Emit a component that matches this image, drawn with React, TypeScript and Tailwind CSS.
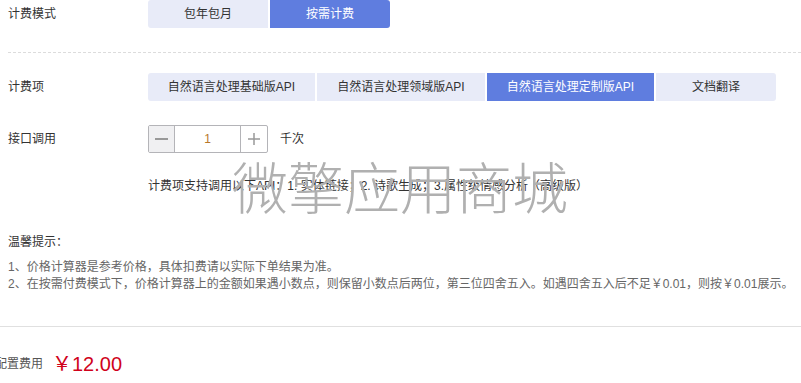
import React, { useState } from "react";

const modes = ["包年包月", "按需计费"];
const items = [
  { name: "自然语言处理基础版API", w: "w-[167px]" },
  { name: "自然语言处理领域版API", w: "w-[168px]" },
  { name: "自然语言处理定制版API", w: "w-[167px]" },
  { name: "文档翻译", w: "w-[120px]" },
];

function App() {
  const [mode, setMode] = useState(1);
  const [item, setItem] = useState(2);
  const [count, setCount] = useState(1);

  return (
    <div
      className="relative w-[801px] h-[383px] overflow-hidden bg-white text-[12px] text-[#333]"
      style={{ fontFamily: '"Liberation Sans", "Noto Sans CJK SC", sans-serif' }}
    >
      {/* 计费模式 */}
      <div className="flex items-center h-[28px] pl-2">
        <div className="w-[140px] shrink-0">计费模式</div>
        <div className="flex gap-[2px]">
          {modes.map((m, i) => (
            <button
              key={m}
              onClick={() => setMode(i)}
              className={`w-[120px] h-[28px] ${i === 0 ? "rounded-l-[3px]" : "rounded-r-[3px]"} ${
                mode === i ? "bg-[#5f7ddf] text-white" : "bg-[#e8ebf8] text-[#333]"
              }`}
            >
              {m}
            </button>
          ))}
        </div>
      </div>

      <div className="ml-2 mt-[24px] border-t border-dashed border-[#dcdcdc]" />

      {/* 计费项 */}
      <div className="flex items-center h-[28px] pl-2 mt-[20px]">
        <div className="w-[140px] shrink-0">计费项</div>
        <div className="flex gap-[2px]">
          {items.map((it, i) => (
            <button
              key={it.name}
              onClick={() => setItem(i)}
              className={`${it.w} h-[28px] ${i === 0 ? "rounded-l-[3px]" : ""} ${
                i === items.length - 1 ? "rounded-r-[3px]" : ""
              } ${item === i ? "bg-[#5f7ddf] text-white" : "bg-[#e8ebf8] text-[#333]"}`}
            >
              {it.name}
            </button>
          ))}
        </div>
      </div>

      {/* 接口调用 */}
      <div className="flex items-center h-[28px] pl-2 mt-[24px]">
        <div className="w-[140px] shrink-0">接口调用</div>
        <div className="flex h-[28px] w-[120px] border border-[#b4b4b8] rounded-[2px]">
          <button
            onClick={() => setCount(Math.max(1, count - 1))}
            className="w-[26px] flex items-center justify-center bg-[#f0f0f2] border-r border-[#b4b4b8]"
          >
            <span className="block w-[13px] h-[1.5px] bg-[#999]" />
          </button>
          <div className="flex-1 flex items-center justify-center text-[#b7772a]">{count}</div>
          <button
            onClick={() => setCount(count + 1)}
            className="w-[27px] flex items-center justify-center border-l border-[#b4b4b8] text-[#999]"
          >
            <svg width="14" height="14" viewBox="0 0 14 14">
              <path d="M7 1v12M1 7h12" stroke="#999" strokeWidth="1.5" />
            </svg>
          </button>
        </div>
        <div className="ml-[12px]">千次</div>
      </div>

      <div className="pl-[148px] mt-[25px] leading-[16px]">
        计费项支持调用以下API：1. 实体链接；2. 诗歌生成；3.属性级情感分析（高级版）
      </div>

      {/* 温馨提示 */}
      <div className="pl-2 mt-[40px] leading-[16px]">温馨提示：</div>
      <div className="pl-2 mt-[9px] leading-[17px] text-[#666]">
        <div>1、价格计算器是参考价格，具体扣费请以实际下单结果为准。</div>
        <div>
          2、在按需付费模式下，价格计算器上的金额如果遇小数点，则保留小数点后两位，第三位四舍五入。如遇四舍五入后不足￥0.01，则按￥0.01展示。
        </div>
      </div>

      <div className="mt-[33px] border-t border-[#e0e0e0]" />

      <div className="flex items-center h-[24px] mt-[25px]">
        <div className="-ml-[5px] w-[57px] text-[#555]">配置费用</div>
        <div className="text-[20px] text-[#d0021b] leading-[24px]">￥12.00</div>
      </div>

      {/* watermark */}
      <div className="absolute left-[232px] top-[155px] text-[56px] leading-[70px] font-light text-[#b0b0b0] pointer-events-none">
        微擎应用商城
      </div>
    </div>
  );
}

export default App;
